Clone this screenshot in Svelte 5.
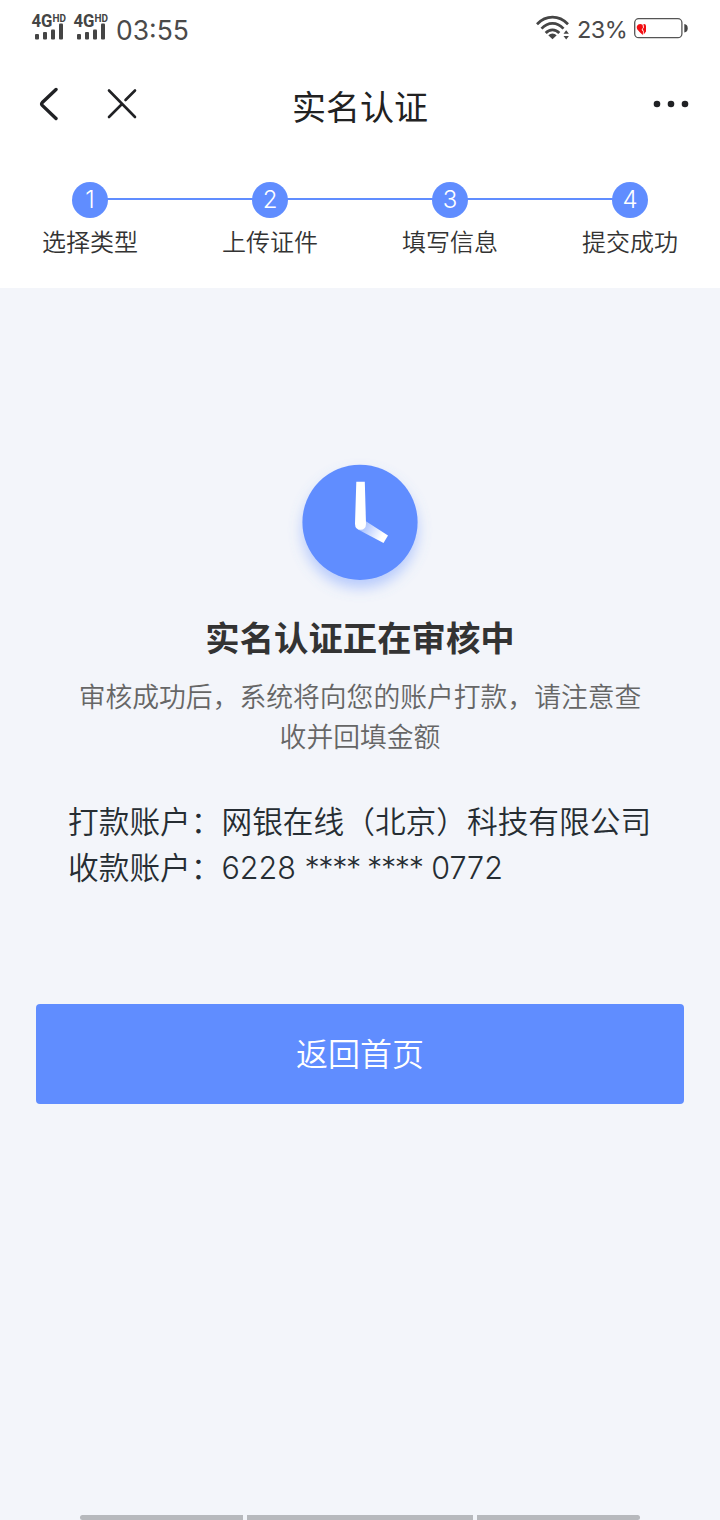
<script>
	const steps = ['选择类型', '上传证件', '填写信息', '提交成功'];
	const tips = ['审核成功后，系统将向您的账户打款，请注意查', '收并回填金额'];
	const account = {
		payer: '网银在线（北京）科技有限公司',
		payee: { start: '6228', mask: '**** ****', end: '0772' }
	};
</script>

<div class="page">
	<div class="status">
		{#each [1, 2] as sim (sim)}
			<svg class="signal" width="36" height="28" viewBox="0 0 36 28">
				<text x="-.5" y="14" font-size="17.5" textLength="21" lengthAdjust="spacingAndGlyphs">4G</text>
				<text x="20.5" y="9.3" font-size="10" textLength="13.5" lengthAdjust="spacingAndGlyphs">HD</text>
				<rect x="3" y="21" width="4" height="5.5" rx="1" />
				<rect x="11" y="19" width="4" height="7.5" rx="1" />
				<rect x="19" y="16.5" width="4" height="10" rx="1" />
				<rect x="27" y="10.5" width="4" height="16" rx="1" />
			</svg>
		{/each}
		<span class="time">03:55</span>
		<svg class="wifi" width="34" height="26" viewBox="0 0 34 26">
			<g fill="none" stroke="#454545" stroke-width="2.7">
				<path d="M1 9.2C10-.2 23-.2 32 9.2" />
				<path d="M5.5 13.6C12 6.7 21 6.7 27.5 13.6" />
				<path d="M9.7 18C13.5 13.8 19.5 13.8 23.3 18" />
			</g>
			<path d="M12.3 20.2Q16.5 17 20.7 20.2L16.5 24.3Z" />
			<path d="M27.5 18.8L30.2 15.2L32.9 18.8ZM27.5 20.9H32.9L30.2 24.5Z" />
		</svg>
		<span class="percent">23%</span>
		<svg class="battery" width="55" height="21" viewBox="0 0 55 21">
			<rect x=".7" y=".7" width="47.2" height="19" rx="4" fill="#fff" stroke="#555" stroke-width="1.3" />
			<path d="M50.3 6Q53.7 6.5 53.7 10.3Q53.7 14 50.3 14.6Z" />
			<path
				fill="#f20d12"
				d="M8.6 6.8Q6.4 5.2 4.3 6.4Q1.9 8 3.2 11.2Q5.2 14 8.9 17L9 13.6L7.6 11.7L9 9.7ZM9.4 6.1Q11.9 5.6 12 8V13.6L9.7 16.6V12.9L8.6 11.6L9.9 9.3Z"
			/>
		</svg>
	</div>

	<header class="nav">
		<div class="nav-left">
			<button class="icon-button" aria-label="返回">
				<svg width="20" height="34" viewBox="0 0 20 34">
					<path d="M17 2.5L3.3 15.5Q2 17 3.3 18.4L17 31.5" />
				</svg>
			</button>
			<button class="icon-button" aria-label="关闭">
				<svg class="close" width="32" height="34" viewBox="0 0 32 34">
					<path d="M3 3.5L29 30M3 30L16 17M19.5 13L29 3.5" />
				</svg>
			</button>
		</div>
		<h1>实名认证</h1>
		<button class="icon-button more" aria-label="更多">
			<svg width="36" height="8" viewBox="0 0 36 8">
				<circle cx="4" cy="4" r="3.3" />
				<circle cx="18" cy="4" r="3.3" />
				<circle cx="32" cy="4" r="3.3" />
			</svg>
		</button>
	</header>

	<ol class="steps">
		{#each steps as step, i}
			<li>
				<span class="dot">{i + 1}</span>
				<span class="label">{step}</span>
			</li>
		{/each}
	</ol>

	<main>
		<svg class="clock" width="160" height="160" viewBox="0 0 160 160">
			<defs>
				<linearGradient id="hand" x1="82" y1="82" x2="104" y2="94" gradientUnits="userSpaceOnUse">
					<stop offset="0" stop-color="#fff" stop-opacity=".45" />
					<stop offset=".9" stop-color="#fff" />
				</linearGradient>
				<filter id="shadow" x="-20%" y="-20%" width="140%" height="150%">
					<feDropShadow dx="0" dy="8" stdDeviation="7" flood-color="#608dff" flood-opacity=".42" />
				</filter>
			</defs>
			<circle cx="80" cy="78.3" r="57.6" fill="#608dff" filter="url(#shadow)" />
			<path d="M84 76L108 91.5L103.5 99L78 85.5Z" fill="url(#hand)" />
			<path d="M76.3 37.8H84.8L86 80Q85.8 85.8 80.5 85.8Q75.2 85.8 75 80Z" fill="#fff" />
		</svg>

		<h2>实名认证正在审核中</h2>
		<div class="tips">
			{#each tips as line}
				<p>{line}</p>
			{/each}
		</div>

		<div class="account">
			<p>打款账户：{account.payer}</p>
			<p>
				收款账户：<span class="number">{account.payee.start} <span class="mask">{account.payee.mask}</span> {account.payee.end}</span>
			</p>
		</div>

		<button class="home">返回首页</button>
	</main>

	<footer>
		<i></i>
		<i></i>
		<i></i>
	</footer>
</div>

<style>
	:global(body) {
		background: #f3f5fa;
	}

	.page {
		display: flex;
		flex-direction: column;
		width: 720px;
		height: 1520px;
		overflow: hidden;
		background: #f3f5fa;
		font-family: 'Noto Sans CJK SC', sans-serif;
		font-weight: 350;
	}

	button {
		padding: 0;
		border: none;
		background: none;
		font: inherit;
		cursor: pointer;
	}

	svg {
		display: block;
		flex: none;
	}

	h1,
	h2,
	p,
	ol {
		margin: 0;
		padding: 0;
	}

	p {
		white-space: nowrap;
	}

	.status {
		display: flex;
		align-items: flex-start;
		box-sizing: border-box;
		height: 60px;
		padding: 13px 31px 0 32px;
		background: #fff;
		color: #4a4a4a;
		fill: #454545;
		font-family: Inter, sans-serif;
		font-weight: 400;
	}

	.signal {
		margin-right: 6px;
		overflow: visible;
	}

	.signal text {
		font-family: Roboto, sans-serif;
		font-weight: 700;
	}

	.time {
		margin-top: 1px;
		font-size: 26.5px;
		line-height: 33px;
	}

	.wifi {
		margin: 2px 7px 0 auto;
	}

	.percent {
		width: 50px;
		margin-right: 7px;
		font-size: 23.5px;
		letter-spacing: -0.6px;
		line-height: 33px;
		white-space: nowrap;
	}

	.battery {
		margin-top: 5px;
	}

	.nav {
		display: grid;
		grid-template-columns: 1fr auto 1fr;
		align-items: center;
		height: 88px;
		padding: 0 31px;
		background: #fff;
	}

	.nav-left {
		display: flex;
		gap: 47px;
		padding-left: 8px;
	}

	.icon-button svg {
		fill: none;
		stroke: #202124;
		stroke-width: 3.4;
		stroke-linecap: round;
	}

	.icon-button .close {
		stroke-width: 2.6;
	}

	.more {
		justify-self: end;
	}

	.more svg {
		fill: #202124;
		stroke: none;
	}

	h1 {
		padding-top: 3px;
		color: #222;
		font-size: 34px;
		font-weight: 400;
		line-height: 85px;
	}

	.steps {
		display: flex;
		box-sizing: border-box;
		height: 140px;
		padding-top: 34px;
		background: #fff;
		list-style: none;
	}

	.steps li {
		display: flex;
		flex: 1;
		flex-direction: column;
		align-items: center;
		background: linear-gradient(#608dff, #608dff) 0 16px / 100% 2px no-repeat;
	}

	.steps li:first-child {
		background-position: 90px 16px;
	}

	.steps li:last-child {
		background-size: 50% 2px;
	}

	.dot {
		width: 36px;
		height: 36px;
		border-radius: 50%;
		background: #608dff;
		color: #fff;
		font-family: Inter, sans-serif;
		font-size: 24px;
		font-weight: 300;
		line-height: 35px;
		text-align: center;
	}

	.label {
		margin-top: 5px;
		color: #333;
		font-size: 24px;
		line-height: 36px;
	}

	main {
		display: flex;
		flex: 1;
		flex-direction: column;
		align-items: center;
		padding: 156px 36px 0;
	}

	h2 {
		margin-top: 7px;
		color: #333;
		font-size: 34.4px;
		font-weight: 700;
		line-height: 50px;
	}

	.tips {
		margin-top: 15px;
		color: #666;
		font-size: 26.8px;
		line-height: 40px;
		text-align: center;
	}

	.account {
		align-self: stretch;
		margin-top: 41px;
		padding-left: 32px;
		color: #262d33;
		font-size: 30.7px;
		line-height: 46px;
	}

	.number {
		font-family: Inter, sans-serif;
		font-size: 30.5px;
		font-weight: 300;
	}

	.mask {
		letter-spacing: -1.4px;
	}

	.home {
		width: 648px;
		height: 100px;
		margin-top: 113px;
		padding-bottom: 5px;
		border-radius: 4px;
		background: #608dff;
		color: #fff;
		font-size: 32px;
	}

	footer {
		display: grid;
		grid-template-columns: 163px 226px 163px;
		gap: 4px;
		justify-content: center;
	}

	footer i {
		height: 5px;
		background: #b7b9bd;
	}

	footer i:first-child {
		border-radius: 3px 0 0 3px;
	}

	footer i:last-child {
		border-radius: 0 3px 3px 0;
	}
</style>
